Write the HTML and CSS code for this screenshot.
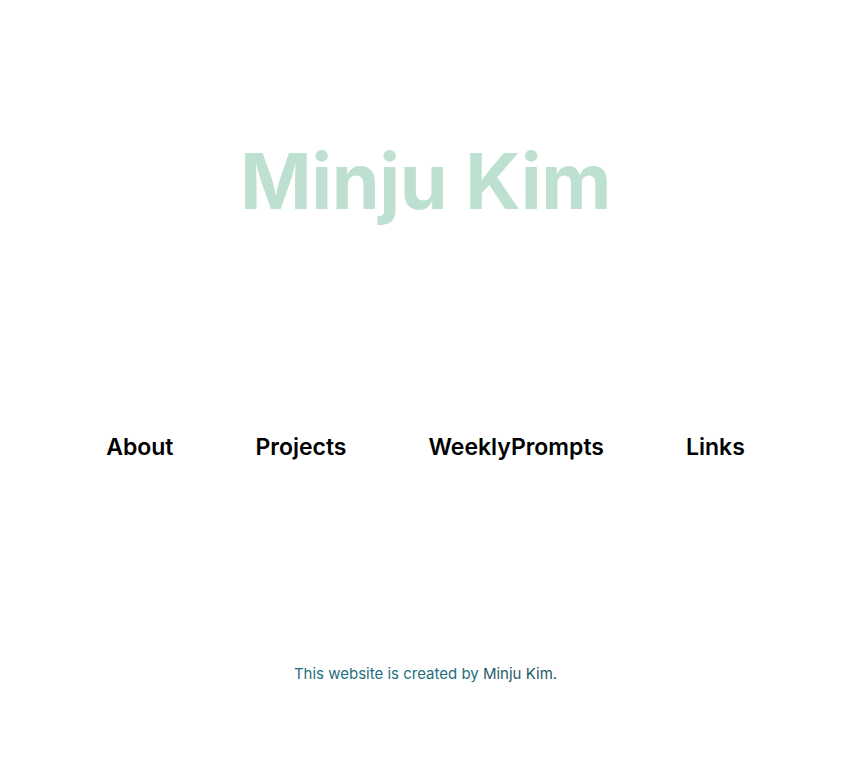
FILE: index.html
```html
<!DOCTYPE html>
<html>
<head>
<meta charset="utf-8">
<link rel="stylesheet" href="styles.css">
</head>
<body>
<header class="hero">
  <h1 class="title">Minju Kim</h1>
</header>
<nav class="nav">
  <a href="#">About</a>
  <a href="#">Projects</a>
  <a href="#">WeeklyPrompts</a>
  <a href="#">Links</a>
</nav>
<footer class="footer">
  <p>This website is created by <span class="name">Minju Kim</span>.</p>
</footer>
</body>
</html>
```
FILE: styles.css
```css
html, body {
  margin: 0;
  padding: 0;
  background: #fff;
  font-family: Inter, "Noto Sans", sans-serif;
}
.hero {
  display: flex;
  justify-content: center;
  padding-top: 133px;
}
.title {
  margin: 0;
  font-size: 77px;
  font-weight: 700;
  color: #bde0d1;
  line-height: 96px;
  letter-spacing: -0.4px;
}
.nav {
  display: flex;
  justify-content: center;
  gap: 82px;
  margin-top: 203px;
}
.nav a {
  color: #000;
  text-decoration: none;
  font-size: 23px;
  font-weight: 600;
  line-height: 30px;
}
.footer {
  display: flex;
  justify-content: center;
  margin-top: 202px;
}
.footer p {
  margin: 0;
  font-size: 15px;
  color: #1f6f80;
  line-height: 20px;
}
.footer .name {
  color: #2a5a66;
}
```
